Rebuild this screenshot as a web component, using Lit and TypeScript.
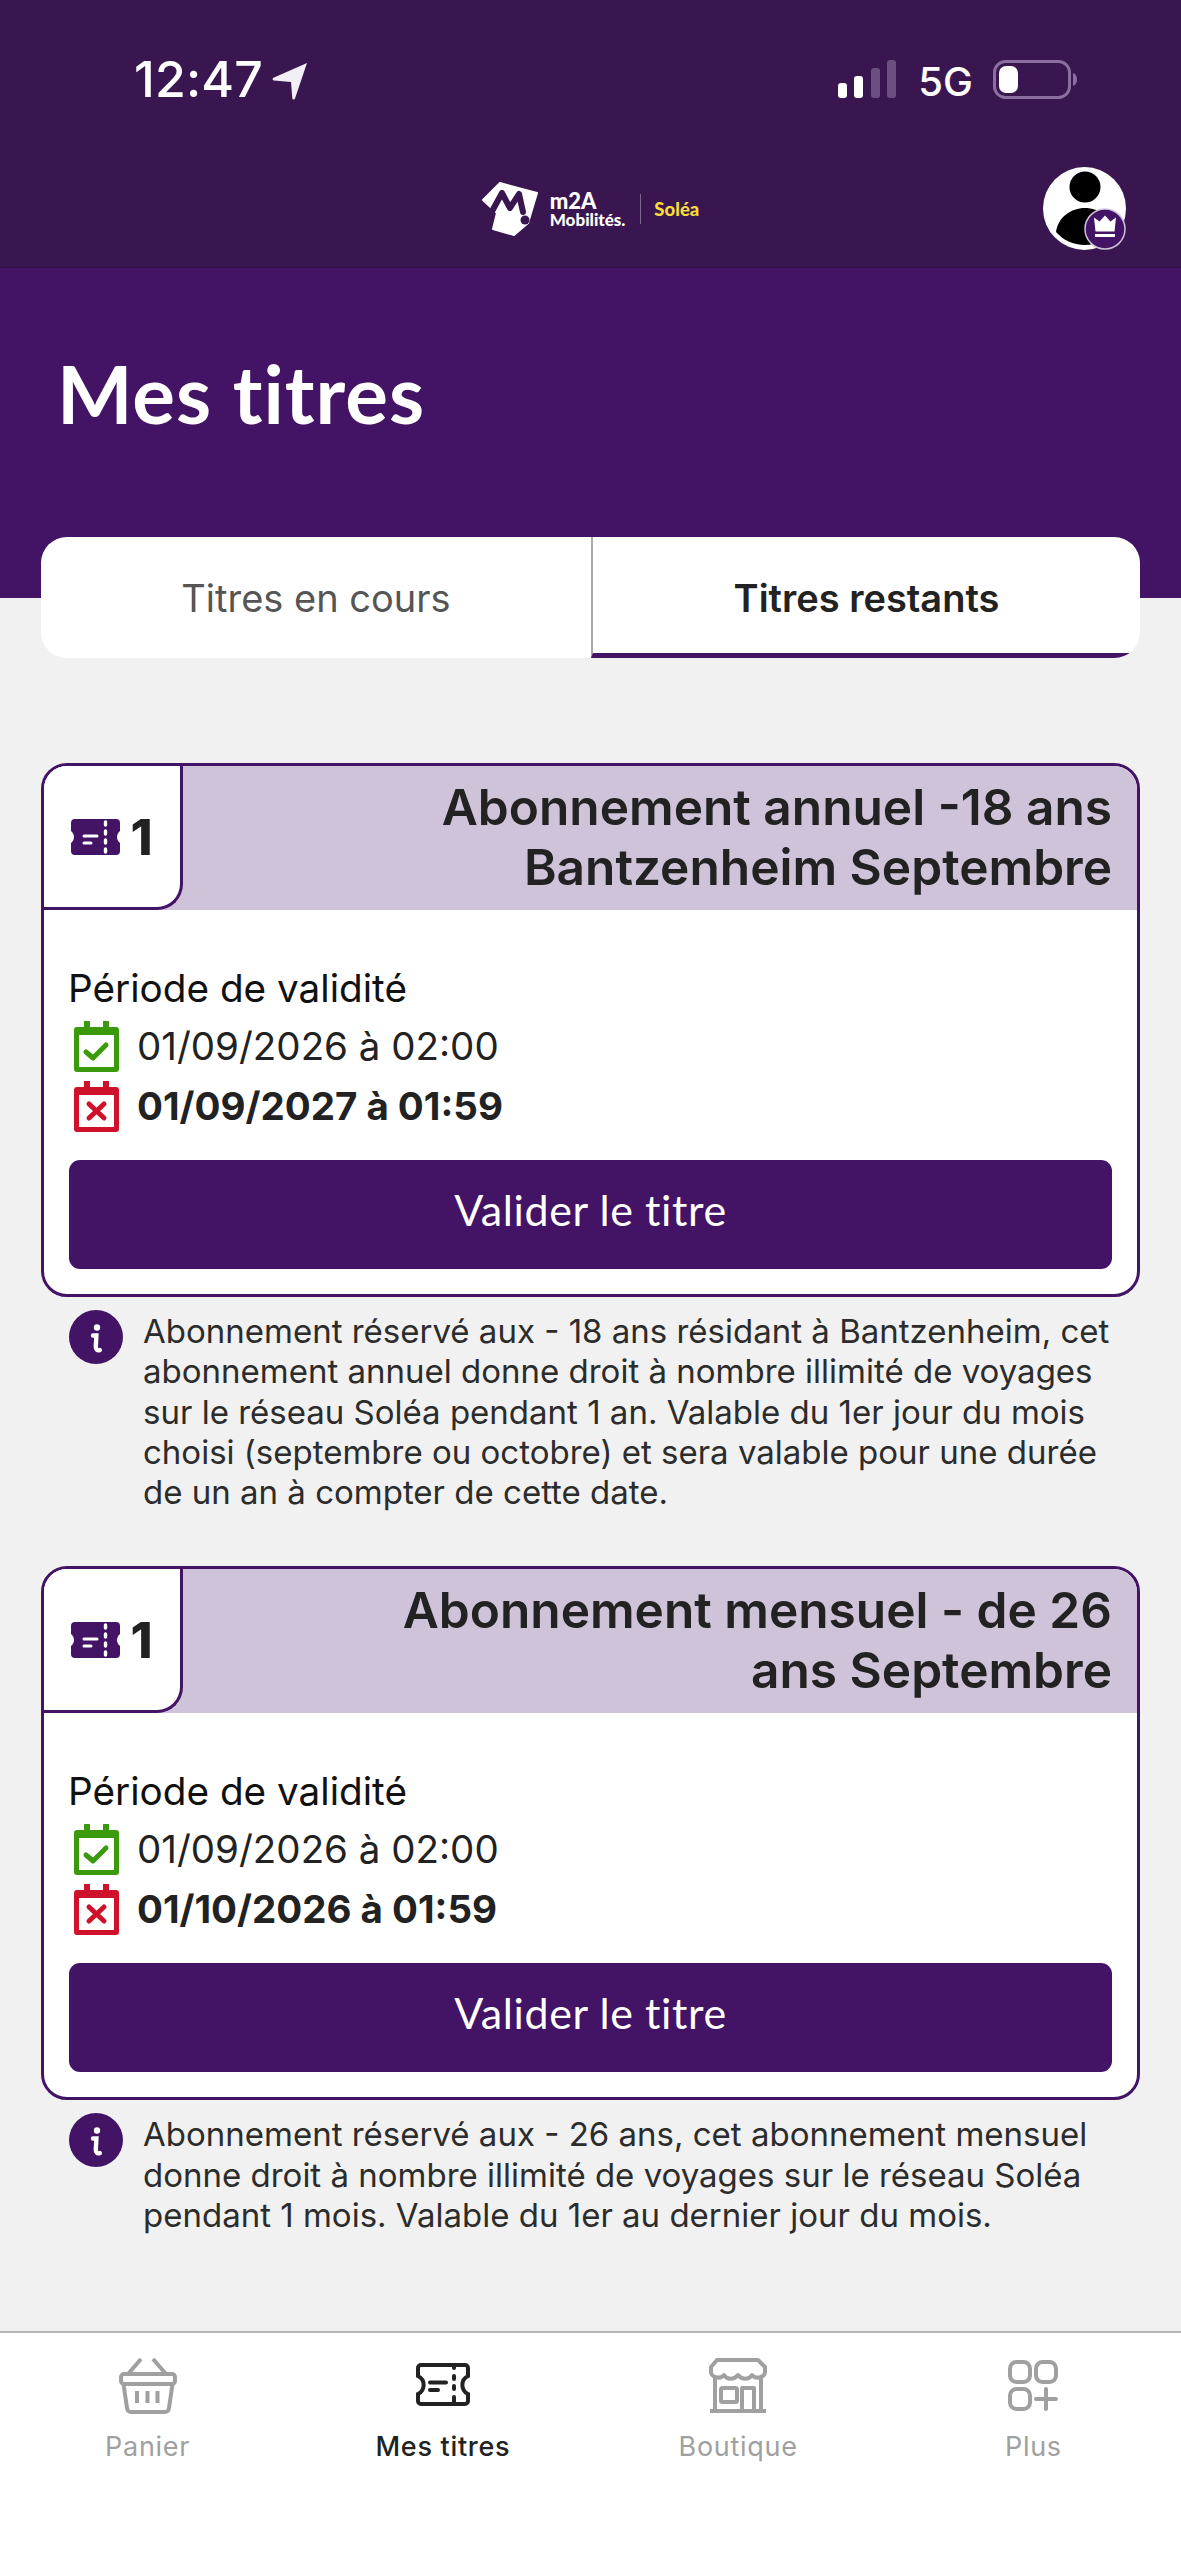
import { LitElement, css, html, svg } from "lit";
import { customElement } from "lit/decorators.js";

interface Ticket {
  title: unknown;
  start: string;
  end: string;
  info: unknown;
}

const TICKETS: Ticket[] = [
  {
    title: html`Abonnement annuel -18 ans<br />Bantzenheim Septembre`,
    start: "01/09/2026 à 02:00",
    end: "01/09/2027 à 01:59",
    info: html`Abonnement réservé aux - 18 ans résidant à Bantzenheim, cet<br />abonnement annuel donne droit à nombre illimité de voyages<br />sur le réseau Soléa pendant 1 an. Valable du 1er jour du mois<br />choisi (septembre ou octobre) et sera valable pour une durée<br />de un an à compter de cette date.`,
  },
  {
    title: html`Abonnement mensuel - de 26<br />ans Septembre`,
    start: "01/09/2026 à 02:00",
    end: "01/10/2026 à 01:59",
    info: html`Abonnement réservé aux - 26 ans, cet abonnement mensuel<br />donne droit à nombre illimité de voyages sur le réseau Soléa<br />pendant 1 mois. Valable du 1er au dernier jour du mois.`,
  },
];

const ticketSolid = svg`<svg class="ticket-solid" viewBox="0 0 49 36">
  <path fill="#431366" d="M4 0H45a4 4 0 0 1 4 4V12a7.500 7.500 0 0 0 0 12V32a4 4 0 0 1-4 4H4a4 4 0 0 1-4-4V24a7.500 7.500 0 0 0 0-12V4a4 4 0 0 1 4-4Z"/>
  <g stroke="#fff" stroke-linecap="round" fill="none">
    <path stroke-width="3" d="M13 17H26M13 24H20"/>
    <path stroke-width="3.400" d="M34.500 3V6M34.500 12V15M34.500 21V24M34.500 30V33"/>
  </g>
</svg>`;

const calendarOk = svg`<svg class="cal" viewBox="0 0 45 51">
  <path fill="#3a9a0c" d="M10 0h6v6h13V0h6v6h7a3 3 0 0 1 3 3v39a3 3 0 0 1-3 3H3a3 3 0 0 1-3-3V9a3 3 0 0 1 3-3h7Z"/>
  <rect x="5" y="14" width="35" height="32" fill="#fff"/>
  <path fill="none" stroke="#3a9a0c" stroke-width="5" stroke-linecap="round" stroke-linejoin="round" d="M12 31l7 6 13-13"/>
</svg>`;

const calendarEnd = svg`<svg class="cal" viewBox="0 0 45 51">
  <path fill="#d0112b" d="M10 0h6v6h13V0h6v6h7a3 3 0 0 1 3 3v39a3 3 0 0 1-3 3H3a3 3 0 0 1-3-3V9a3 3 0 0 1 3-3h7Z"/>
  <rect x="5" y="14" width="35" height="32" fill="#fff"/>
  <path fill="none" stroke="#d0112b" stroke-width="5" stroke-linecap="round" d="M15 23L30 37M30 23L15 37"/>
</svg>`;

const infoIcon = svg`<svg class="info-icon" viewBox="0 0 54 54">
  <circle cx="27" cy="27" r="27" fill="#431366"/>
  <circle cx="28" cy="17.500" r="3.200" fill="#fff"/>
  <path fill="none" stroke="#fff" stroke-width="4.400" stroke-linecap="round" d="M24 25.500h3.400l-.6 11c-.1 3 1.400 4.400 4 3.600"/>
</svg>`;

const navIcons = {
  basket: svg`<svg class="nav-icon" width="58" height="56" viewBox="0 0 58 56" fill="none" stroke="currentColor" stroke-width="4">
    <path d="M9 16L22 1M47 16L34 1"/>
    <rect x="2" y="16" width="54" height="10" rx="3"/>
    <path d="M4.500 26L8 50a4 4 0 0 0 4 4H46a4 4 0 0 0 4-4L53.500 26"/>
    <path d="M18 33V45M28.500 33V45M38.500 33V45"/>
  </svg>`,
  ticket: svg`<svg class="nav-icon" width="58" height="56" viewBox="0 0 58 56" fill="none" stroke="currentColor" stroke-width="4" stroke-linecap="round">
    <path d="M7 7H51a3 3 0 0 1 3 3V18a10 10 0 0 0 0 18V43a3 3 0 0 1-3 3H7a3 3 0 0 1-3-3V36a10 10 0 0 0 0-18V10a3 3 0 0 1 3-3Z"/>
    <path d="M16 24.500H32M16 32H24M40 7V10M40 18V21M40 28V31M40 39V46"/>
  </svg>`,
  shop: svg`<svg class="nav-icon" width="58" height="56" viewBox="0 0 58 56" fill="none" stroke="currentColor" stroke-width="4" stroke-linejoin="round">
    <path d="M8 2H49L56 9V14C56 19 47 22 43 17C40 22 33 22 29 17C25 22 18 22 15 17C11 22 2 19 2 14V9Z"/>
    <path d="M6 20V52M52 20V52M1 53H57"/>
    <rect x="12" y="30" width="16" height="14" rx="1.500"/>
    <path d="M33 53V30H45V53"/>
  </svg>`,
  more: svg`<svg class="nav-icon" width="58" height="56" viewBox="0 0 58 56" fill="none" stroke="currentColor" stroke-width="4" stroke-linecap="round">
    <rect x="6" y="4" width="20" height="20" rx="6.500"/>
    <rect x="32" y="4" width="20" height="20" rx="6.500"/>
    <rect x="6" y="31" width="20" height="20" rx="6.500"/>
    <path d="M42 31V51M32 41H52"/>
  </svg>`,
};

@customElement("app-root")
export class AppRoot extends LitElement {
  static styles = css`
    :host {
      display: block;
      width: 1181px;
      height: 2560px;
      overflow: hidden;
      background: #f1f1f1;
      font-family: Inter, "Liberation Sans", sans-serif;
      color: #222;
    }
    .page {
      display: flex;
      flex-direction: column;
      height: 100%;
    }
    .top {
      height: 268px;
      box-sizing: border-box;
      background: #3a1650;
      border-bottom: 1px solid #2e1140;
      padding-top: 60px;
      flex-shrink: 0;
    }
    .status {
      display: flex;
      align-items: flex-start;
      height: 40px;
      padding: 0 103px 0 134px;
      color: #fff;
    }
    .time {
      font-size: 50px;
      font-weight: 500;
      line-height: 38px;
      letter-spacing: 0.2px;
    }
    .arrow {
      width: 38px;
      height: 38px;
      margin: 2px 0 0 8px;
    }
    .status-right {
      display: flex;
      align-items: flex-start;
      margin-left: auto;
    }
    .signal {
      width: 58px;
      height: 40px;
    }
    .net {
      font-size: 40px;
      font-weight: 500;
      line-height: 40px;
      margin: 2px 20px 0 22px;
    }
    .battery {
      width: 85px;
      height: 40px;
    }
    .brand {
      display: grid;
      grid-template-columns: 1fr auto 1fr;
      align-items: center;
      margin-top: 67px;
      padding: 0 55px;
    }
    .logo {
      grid-column: 2;
      display: flex;
      align-items: center;
      color: #fff;
    }
    .logo-mark {
      width: 56px;
      height: 55px;
    }
    .logo-words {
      display: flex;
      flex-direction: column;
      margin-left: 12px;
      font-family: Lato, sans-serif;
      font-weight: 900;
    }
    .m2a {
      font-size: 22px;
      line-height: 21px;
    }
    .mob {
      font-size: 17px;
      line-height: 17px;
    }
    .logo-sep {
      width: 1px;
      height: 30px;
      background: #7d6791;
      margin: 0 13px 0 15px;
    }
    .solea {
      font-family: Lato, sans-serif;
      font-weight: 900;
      font-size: 18.500px;
      color: #f7dc3c;
    }
    .avatar {
      grid-column: 3;
      justify-self: end;
      width: 83px;
      height: 83px;
    }
    .band {
      height: 330px;
      box-sizing: border-box;
      background: #431366;
      padding: 75px 0 0 57px;
      flex-shrink: 0;
    }
    h1 {
      margin: 0;
      color: #fff;
      font-family: Lato, sans-serif;
      font-weight: 700;
      font-size: 80px;
      line-height: 100px;
      letter-spacing: 1px;
      font-variant-ligatures: none;
    }
    .tabs {
      display: grid;
      grid-template-columns: 550px 1fr;
      margin: -61px 41px 0;
      height: 121px;
      background: #fff;
      border-radius: 26px;
      overflow: hidden;
      flex-shrink: 0;
    }
    .tab {
      display: flex;
      align-items: center;
      justify-content: center;
      font-size: 38px;
      color: #555;
      box-sizing: border-box;
    }
    .tab.on {
      border-left: 2px solid #aaa;
      border-bottom: 5px solid #431366;
      padding-top: 5px;
      color: #222;
      font-weight: 600;
    }
    .tickets {
      flex: 1;
      padding: 105px 41px 0;
    }
    .ticket + .ticket {
      margin-top: 54px;
    }
    .card {
      border: 3px solid #431366;
      border-radius: 26px;
      background: #fff;
      overflow: hidden;
    }
    .card-head {
      display: flex;
      height: 144px;
      background: #cfc3d9;
    }
    .count {
      display: flex;
      align-items: center;
      justify-content: center;
      gap: 10px;
      width: 139px;
      box-sizing: border-box;
      background: #fff;
      border-right: 3px solid #431366;
      border-bottom: 3px solid #431366;
      border-bottom-right-radius: 26px;
      font-size: 50px;
      font-weight: 800;
    }
    .ticket-solid {
      width: 49px;
      height: 36px;
    }
    .card-title {
      flex: 1;
      align-self: center;
      text-align: right;
      font-size: 49.600px;
      font-weight: 600;
      line-height: 60px;
      padding: 0 25px 2px 0;
      white-space: nowrap;
    }
    .card-body {
      padding: 55px 25px 25px;
    }
    .period {
      font-size: 38.700px;
      line-height: 46px;
      color: #111;
      margin-left: -1px;
    }
    .date {
      display: flex;
      align-items: center;
      gap: 18px;
      height: 60px;
      padding-left: 5px;
      font-size: 38.500px;
    }
    .period + .date {
      margin-top: 5px;
    }
    .date.end {
      font-weight: 700;
    }
    .cal {
      width: 45px;
      height: 51px;
    }
    .validate {
      display: flex;
      align-items: center;
      justify-content: center;
      height: 109px;
      box-sizing: border-box;
      padding-bottom: 10px;
      margin-top: 24px;
      border-radius: 11px;
      background: #431366;
      color: #fff;
      font-family: Lato, sans-serif;
      font-size: 43px;
      letter-spacing: 0.6px;
    }
    .info {
      display: flex;
      gap: 20px;
      padding: 13px 0 0 28px;
      font-size: 33px;
      line-height: 40.300px;
      color: #2c2c2c;
      white-space: nowrap;
    }
    .info-icon {
      width: 54px;
      height: 54px;
      flex-shrink: 0;
    }
    .info-text {
      margin-top: 1px;
    }
    .nav {
      display: grid;
      grid-template-columns: repeat(4, 1fr);
      height: 229px;
      box-sizing: border-box;
      padding-top: 25px;
      background: #fff;
      border-top: 2px solid #b4b4b4;
      flex-shrink: 0;
    }
    .nav-item {
      display: flex;
      flex-direction: column;
      align-items: center;
      color: #a0a0a0;
      font-size: 27px;
      letter-spacing: 0.7px;
    }
    .nav-item.on {
      color: #222;
      font-weight: 500;
    }
    .nav-item span {
      margin-top: 16px;
      line-height: 34px;
    }
  `;

  private renderTicket(t: Ticket) {
    return html`<section class="ticket">
      <div class="card">
        <div class="card-head">
          <div class="count">${ticketSolid}<span>1</span></div>
          <div class="card-title">${t.title}</div>
        </div>
        <div class="card-body">
          <div class="period">Période de validité</div>
          <div class="date">${calendarOk}<span>${t.start}</span></div>
          <div class="date end">${calendarEnd}<span>${t.end}</span></div>
          <div class="validate">Valider le titre</div>
        </div>
      </div>
      <div class="info">${infoIcon}<div class="info-text">${t.info}</div></div>
    </section>`;
  }

  render() {
    return html`<div class="page">
      <header class="top">
        <div class="status">
          <span class="time">12:47</span>
          <svg class="arrow" viewBox="0 0 38 38">
            <path fill="#f2eef5" d="M36 1L24 36.500c-.5 1.500-2.500 1.300-2.700-.3L20 20 3 18.500c-1.600-.2-1.900-2-.5-2.800Z" />
          </svg>
          <div class="status-right">
            <svg class="signal" viewBox="0 0 58 40">
              <rect x="0" y="23" width="9" height="15" rx="3" fill="#fff" />
              <rect x="16" y="16" width="9" height="22" rx="3" fill="#fff" />
              <rect x="33" y="8" width="9" height="30" rx="3" fill="#6b4f80" />
              <rect x="49" y="0" width="9" height="38" rx="3" fill="#6b4f80" />
            </svg>
            <span class="net">5G</span>
            <svg class="battery" viewBox="0 0 85 40">
              <rect x="1.500" y="1.500" width="75" height="36" rx="11" fill="none" stroke="#8a6fa0" stroke-width="3" />
              <rect x="6" y="6" width="19" height="27" rx="7" fill="#fff" />
              <path d="M80 13c3 1 4 4 4 6.500s-1 5.500-4 6.500Z" fill="#8a6fa0" />
            </svg>
          </div>
        </div>
        <div class="brand">
          <div class="logo">
            <svg class="logo-mark" viewBox="0 0 56 55">
              <path fill="#fff" stroke="#fff" stroke-width="2" stroke-linejoin="round" d="M18 2L55 12 46 42 32 54 11 48 15 32 1 19Z" />
              <path fill="none" stroke="#3a1650" stroke-width="6" stroke-linejoin="round" stroke-linecap="round" d="M8 34L20 12 28 27 37 13 41 31" />
              <circle cx="43" cy="39" r="4.500" fill="#3a1650" />
            </svg>
            <div class="logo-words"><span class="m2a">m2A</span><span class="mob">Mobilités.</span></div>
            <div class="logo-sep"></div>
            <span class="solea">Soléa</span>
          </div>
          <svg class="avatar" viewBox="0 0 83 83">
            <circle cx="41.500" cy="41.500" r="41.500" fill="#fff" />
            <circle cx="42" cy="20" r="15.500" fill="#000" />
            <path fill="#000" d="M13 65C15 50 28 41 42 41S69 50 71 65C64 73 54 78 42 78S20 73 13 65Z" />
            <circle cx="62" cy="62" r="20" fill="#431366" stroke="#cfc3d9" stroke-width="1.500" />
            <path fill="#fff" d="M51 50.500l5.500 4 5.500-6 5.500 6 5.500-4-1.500 14H52.500Z" />
            <rect x="52" y="67" width="20" height="3" fill="#fff" />
          </svg>
        </div>
      </header>
      <div class="band"><h1>Mes titres</h1></div>
      <div class="tabs">
        <div class="tab">Titres en cours</div>
        <div class="tab on">Titres restants</div>
      </div>
      <main class="tickets">${TICKETS.map((t) => this.renderTicket(t))}</main>
      <nav class="nav">
        <div class="nav-item">${navIcons.basket}<span>Panier</span></div>
        <div class="nav-item on">${navIcons.ticket}<span>Mes titres</span></div>
        <div class="nav-item">${navIcons.shop}<span>Boutique</span></div>
        <div class="nav-item">${navIcons.more}<span>Plus</span></div>
      </nav>
    </div>`;
  }
}

declare global {
  interface HTMLElementTagNameMap {
    "app-root": AppRoot;
  }
}
